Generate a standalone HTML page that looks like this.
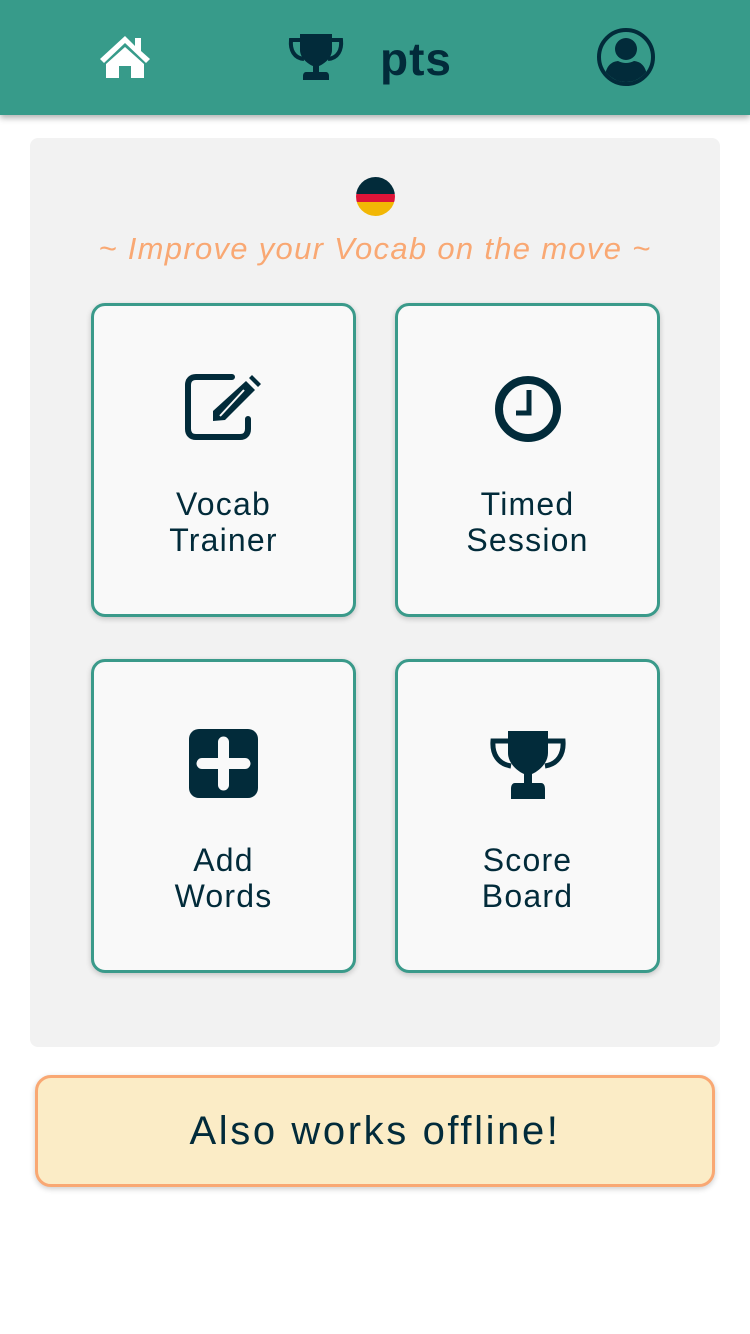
<!DOCTYPE html>
<html><head><style>
*{box-sizing:border-box;margin:0;padding:0}
body{width:750px;height:1334px;background:#fff;font-family:"Liberation Sans",sans-serif;color:#022b3a;position:relative;overflow:hidden}
.hdr{position:absolute;left:0;top:0;width:750px;height:115px;background:#379b8a;box-shadow:0 3px 6px rgba(0,0,0,.3)}
.panel{position:absolute;left:30px;top:138px;width:690px;height:909px;background:#f2f2f2;border-radius:8px}
.card{position:absolute;width:265px;height:314px;background:#f9f9f9;border:3px solid #3a9a8a;border-radius:14px;box-shadow:0 2px 6px rgba(0,0,0,.2);text-align:center}
.card svg{position:absolute;left:50%;transform:translateX(-50%)}
.lbl{position:absolute;left:0;right:0;top:180px;font-size:32px;line-height:36px;letter-spacing:1.2px}
.tag{position:absolute;left:0;width:750px;top:231px;text-align:center;font-style:italic;font-size:31px;letter-spacing:1.3px;color:#f9a873}
.off{position:absolute;left:35px;top:1075px;width:680px;height:112px;background:#fbecc6;border:3px solid #f9a873;border-radius:16px;box-shadow:0 2px 6px rgba(0,0,0,.2);text-align:center;font-size:40px;line-height:106px;letter-spacing:2.6px}
</style></head><body>
<div class="hdr">
<svg style="position:absolute;left:98px;top:34px" width="54" height="46" viewBox="0 0 54 46"><path d="M27 2 L2 25 L6 29 L27 9 L48 29 L52 25 L43 17 L43 4 L37 4 L37 12 Z" fill="#fff"/><path d="M8 30 L27 13 L46 30 L46 44 L33 44 L33 32 L21 32 L21 44 L8 44 Z" fill="#fff"/></svg>
<svg style="position:absolute;left:288px;top:32px" width="56" height="50" viewBox="0 0 56 50"><path d="M12 2 H44 V18 C44 26 36 32 31 34 V40 H38 C40 40 41 42 41 44 V48 H15 V44 C15 42 16 40 18 40 H25 V34 C20 32 12 26 12 18 Z" fill="#022b3a"/><path d="M12 8 H3 C2 18 6 26 16 27 M44 8 H53 C54 18 50 26 40 27" fill="none" stroke="#022b3a" stroke-width="4"/></svg>
<div style="position:absolute;left:380px;top:32px;font-size:46px;font-weight:bold;letter-spacing:1px;color:#022b3a">pts</div>
<svg style="position:absolute;left:596px;top:27px" width="60" height="60" viewBox="0 0 60 60"><defs><clipPath id="c"><circle cx="30" cy="30" r="25"/></clipPath></defs><circle cx="30" cy="30" r="27" fill="none" stroke="#022b3a" stroke-width="4"/><g clip-path="url(#c)" fill="#022b3a"><circle cx="30" cy="22" r="11"/><path d="M8 60 C8 40 14 35 22 34 Q30 38 38 34 C46 35 52 40 52 60 Z"/></g></svg>
</div>
<div class="panel"></div>
<svg style="position:absolute;left:356px;top:177px" width="39" height="39" viewBox="0 0 39 39"><defs><clipPath id="f"><circle cx="19.5" cy="19.5" r="19.5"/></clipPath></defs><g clip-path="url(#f)"><rect width="39" height="17" fill="#022b3a"/><rect y="17" width="39" height="8" fill="#dd1438"/><rect y="25" width="39" height="14" fill="#f2b705"/></g></svg>
<div class="tag">~ Improve your Vocab on the move ~</div>
<div class="card" style="left:91px;top:303px">
<svg style="top:67px" width="84" height="68" viewBox="0 0 84 68"><path d="M50 4 H14 C9 4 6 7 6 12 V56 C6 61 9 64 14 64 H58 C63 64 66 61 66 56 V46" fill="none" stroke="#022b3a" stroke-width="6" stroke-linecap="round"/><path d="M70 2 L79 11 L76 14 L67 5 Z M64 8 L73 17 L43 47 L31 48 L31 38 Z" fill="#022b3a"/><path d="M38 43 L62 17" stroke="#f9f9f9" stroke-width="2"/></svg>
<div class="lbl">Vocab<br>Trainer</div></div>
<div class="card" style="left:395px;top:303px">
<svg style="top:67px" width="72" height="72" viewBox="0 0 72 72"><circle cx="36" cy="36" r="29" fill="none" stroke="#022b3a" stroke-width="8"/><path d="M37 17 V40 H24" fill="none" stroke="#022b3a" stroke-width="5"/></svg>
<div class="lbl">Timed<br>Session</div></div>
<div class="card" style="left:91px;top:659px">
<svg style="top:67px" width="70" height="70" viewBox="0 0 70 70"><rect x="0" y="0" width="69" height="69" rx="10" fill="#022b3a"/><path d="M34.5 13 V56 M13 34.5 H56" stroke="#f9f9f9" stroke-width="11" stroke-linecap="round"/></svg>
<div class="lbl">Add<br>Words</div></div>
<div class="card" style="left:395px;top:659px">
<svg style="top:67px" width="78" height="72" viewBox="0 0 78 72"><path d="M19 2 H59 V24 C59 34 50 42 43 45 V54 H52 C55 54 56 57 56 60 V70 H22 V60 C22 57 23 54 26 54 H35 V45 C28 42 19 34 19 24 Z" fill="#022b3a"/><path d="M19 12 H4 C3 25 9 35 22 37 M59 12 H74 C75 25 69 35 56 37" fill="none" stroke="#022b3a" stroke-width="5"/></svg>
<div class="lbl">Score<br>Board</div></div>
<div class="off">Also works offline!</div>
</body></html>
